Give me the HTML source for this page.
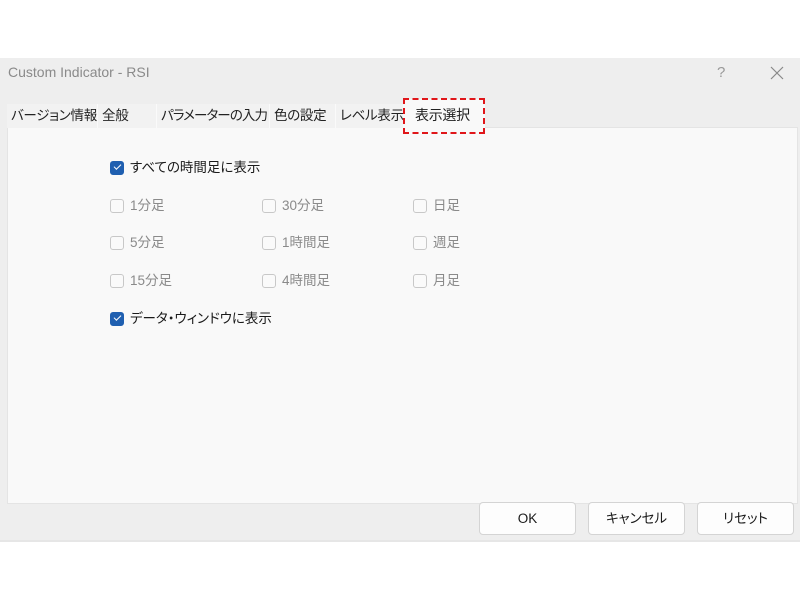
<!DOCTYPE html>
<html><head><meta charset="utf-8"><style>
*{margin:0;padding:0;box-sizing:border-box}
body{width:800px;height:600px;background:#fff;position:relative;overflow:hidden;font-family:"Liberation Sans","Noto Sans CJK JP",sans-serif;font-size:13px;color:#1a1a1a;font-feature-settings:"palt"}
.dlg{position:absolute;left:0;top:58px;width:800px;height:484px;background:#eeeeee;border-bottom:2px solid #e6e6e6}
.title{position:absolute;left:8px;top:64px;font-size:14px;color:#8a8a8a}
.tab{position:absolute;top:104px;height:24px;line-height:24px;font-size:13.5px;padding-left:4px;background:#f2f2f2;border-right:1px solid #fafafa;color:#222;white-space:nowrap;overflow:hidden;letter-spacing:-0.3px}
.panel{position:absolute;left:7px;top:127px;width:791px;height:377px;background:#f9f9f9;border:1px solid #e4e4e4}
.cb{position:absolute;width:14px;height:14px;border:1px solid #c8c8c8;border-radius:3px;background:#fafafa}
.cb.on{background:#1f5fb0;border-color:#1f5fb0}
.cb.on:after{content:"";position:absolute;left:3px;top:2px;width:6px;height:3px;border-left:1.5px solid #fff;border-bottom:1.5px solid #fff;transform:rotate(-45deg)}
.lb{position:absolute;font-size:13.5px;color:#8a8a8a;line-height:16px;white-space:nowrap}
.lb.on{color:#1a1a1a}
.btn{position:absolute;top:502px;width:97px;height:33px;background:#fdfdfd;border:1px solid #d4d4d4;border-radius:4px;text-align:center;line-height:31px;font-size:13.5px;color:#1a1a1a}
</style></head><body>
<div class="dlg"></div>
<div class="title">Custom Indicator - RSI</div>
<div style="position:absolute;left:717px;top:64px;font-size:15px;color:#999">?</div>
<svg style="position:absolute;left:770px;top:66px" width="14" height="14"><path d="M1 1L13 13M13 1L1 13" stroke="#888" stroke-width="1.2"/></svg>
<div class="panel"></div>
<div class="tab" style="left:7px;width:91px">バージョン情報</div>
<div class="tab" style="left:98px;width:59px">全般</div>
<div class="tab" style="left:157px;width:113px;letter-spacing:-0.9px">パラメーターの入力</div>
<div class="tab" style="left:270px;width:66px">色の設定</div>
<div class="tab" style="left:336px;width:68px">レベル表示</div>
<div class="tab" style="left:404px;width:81px;top:99px;height:29px;line-height:32px;background:#f9f9f9;padding-left:11px;font-size:14px">表示選択</div>
<div style="position:absolute;left:403px;top:98px;width:82px;height:36px;border:2.5px dashed #e0161a"></div>

<div class="cb on" style="left:110px;top:161px"></div><div class="lb on" style="left:130px;top:160px">すべての時間足に表示</div>

<div class="cb" style="left:110px;top:199px"></div><div class="lb" style="left:130px;top:198px">1分足</div>
<div class="cb" style="left:262px;top:199px"></div><div class="lb" style="left:282px;top:198px">30分足</div>
<div class="cb" style="left:413px;top:199px"></div><div class="lb" style="left:433px;top:198px">日足</div>

<div class="cb" style="left:110px;top:236px"></div><div class="lb" style="left:130px;top:235px">5分足</div>
<div class="cb" style="left:262px;top:236px"></div><div class="lb" style="left:282px;top:235px">1時間足</div>
<div class="cb" style="left:413px;top:236px"></div><div class="lb" style="left:433px;top:235px">週足</div>

<div class="cb" style="left:110px;top:274px"></div><div class="lb" style="left:130px;top:273px">15分足</div>
<div class="cb" style="left:262px;top:274px"></div><div class="lb" style="left:282px;top:273px">4時間足</div>
<div class="cb" style="left:413px;top:274px"></div><div class="lb" style="left:433px;top:273px">月足</div>

<div class="cb on" style="left:110px;top:312px"></div><div class="lb on" style="left:130px;top:311px">データ・ウィンドウに表示</div>

<div class="btn" style="left:479px">OK</div>
<div class="btn" style="left:588px">キャンセル</div>
<div class="btn" style="left:697px">リセット</div>
</body></html>
